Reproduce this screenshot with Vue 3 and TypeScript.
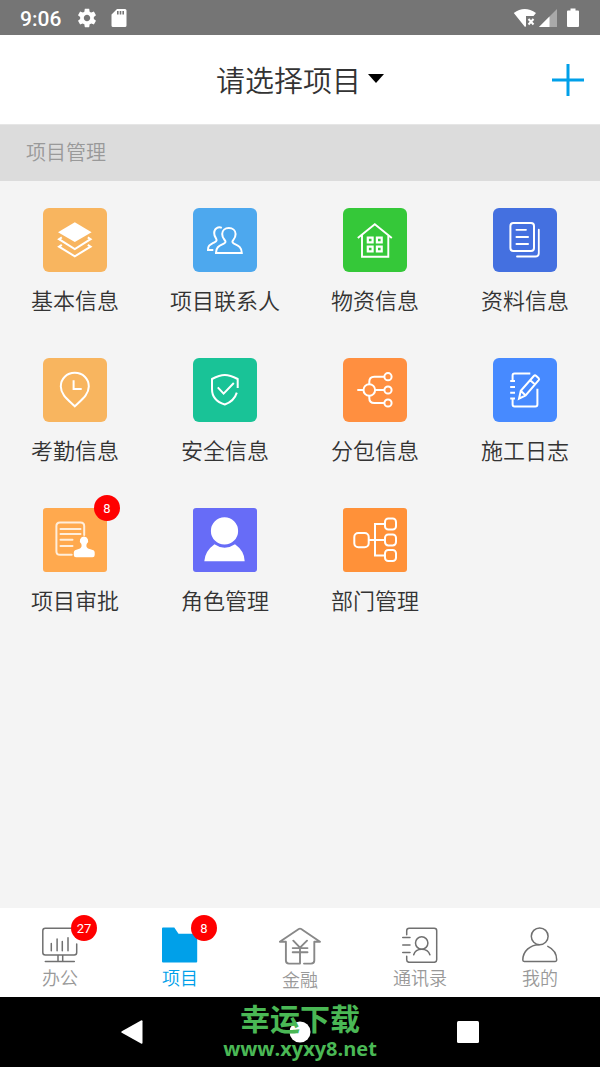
<script setup lang="ts">
import { ref } from 'vue'

interface Tile {
  label: string
  color: string
  art: string
  radius?: 'tight'
  badge?: number
}

interface Tab {
  label: string
  width: number
  height: number
  art: string
  badge?: number
}

const tiles: Tile[] = [
  {
    label: '基本信息',
    color: '#f8b55f',
    art: '<path fill="#fff" stroke="none" d="M31.8 14.3 48.6 24.2 31.8 34 15 24.2Z"/><path d="M18.8 29.3 16 31.2 31.8 41 47.6 31.2 44.8 29.3M18.8 36.8 16 38.7 31.8 48.3 47.6 38.7 44.8 36.8"/>',
  },
  {
    label: '项目联系人',
    color: '#4da8ee',
    art: '<path d="M23 45C23 39 26 38 30.8 35.6 33 34.5 33 33.5 31.3 31.5 29.8 29.7 29.2 28 29.2 26 29.2 22.4 32 20 35.8 20S42.6 22.4 42.6 26C42.6 28.5 42 30 40.4 31.8 39 33.5 39 34.5 41 35.6 46 38 48.8 39.5 48.8 45ZM28.8 19.8C25 18.2 21 21 21.2 25 21.2 27.3 21.7 28.7 22.8 30 24 32 24 33 21.5 34.3 17 36.8 14.8 37.5 15 42H20.3"/>',
  },
  {
    label: '物资信息',
    color: '#35c839',
    art: '<path stroke-width="1.9" d="M14.8 30 31.8 16.3 48.8 30M19 27V48.7H45.3V27"/><path stroke-width="2.2" stroke-linejoin="miter" d="M24.8 29.6h4.8v4.8h-4.8ZM33.9 29.6h4.8v4.8h-4.8ZM24.8 38.6h4.8v4.8h-4.8ZM33.9 38.6h4.8v4.8h-4.8Z"/>',
  },
  {
    label: '资料信息',
    color: '#4470e0',
    art: '<rect x="17.4" y="15" width="23.6" height="28" rx="3"/><path stroke-width="1.8" stroke-linecap="round" d="M23.4 21.8h9.6M23.4 29h11.7M23.4 36h11.7M45.8 21.7V45.2Q45.8 48.5 42.5 48.5H24"/>',
  },
  {
    label: '考勤信息',
    color: '#f8b55f',
    art: '<path d="M31.8 48.3C26 42.5 17.8 37 17.8 28.5 17.8 20.7 23.8 14.8 31.8 14.8S45.8 20.7 45.8 28.5C45.8 37 37.6 42.5 31.8 48.3ZM30.6 22.3V31H38.7"/>',
  },
  {
    label: '安全信息',
    color: '#19c397',
    art: '<path d="M44.7 30V21Q37 17 31.8 17T19 21V31C19 39 24 44.2 31.8 46.5 38 44.3 42 40.5 43.8 34.6M24.8 29.4 30.6 35.6 40.8 25"/>',
  },
  {
    label: '分包信息',
    color: '#ff8f40',
    art: '<circle cx="26.3" cy="32" r="5.8"/><circle cx="45" cy="18.7" r="3.6"/><circle cx="45" cy="32" r="3.6"/><circle cx="45" cy="45" r="3.6"/><path d="M14.3 32h6.2M32.1 32h9.3M41.4 18.7H31.3Q26.3 18.7 26.3 23.7V26.2M41.4 45H31.3Q26.3 45 26.3 40V37.8"/>',
  },
  {
    label: '施工日志',
    color: '#478aff',
    art: '<path d="M37.3 15.4H21.5Q19.6 15.4 19.6 17.3V23M17.2 23H22M17.2 29H22M17.2 34.8H22M17.2 40.5H22M19.6 40.5V46.5Q19.6 48.5 21.6 48.5H42.4Q44.4 48.5 44.4 46.5V30.8M26 40.7 27.8 32.8 41 17.8 Q42 17 43 17.8L45.7 20.3Q46.5 21.2 45.7 22.2L32.6 37.5ZM27.8 32.8 32.6 37.5M37.3 22.2 42 26.5"/>',
  },
  {
    label: '项目审批',
    color: '#ffa94e',
    radius: 'tight',
    badge: 8,
    art: '<path stroke="#ffeedb" stroke-linecap="round" d="M28.7 46.8H17Q13.4 46.8 13.4 43.2V18Q13.4 14.4 17 14.4H37.5Q41.2 14.4 41.2 18V27M17.5 21H37.5M17.5 26H37.5M17.5 31.8H29.5M17.5 38H29.5"/><path fill="#fff" stroke="none" d="M41 28.5A4.2 4.2 0 0 1 43.8 35.8C43 37.5 43.3 39.6 45 40.5L50.5 42.3Q51.7 43 51.7 44.5V47Q51.7 49.3 49.5 49.3H33Q30.8 49.3 30.8 47V44.5Q30.8 43 32 42.3L37 40.5C38.7 39.6 39 37.5 38.2 35.8A4.2 4.2 0 0 1 41 28.5Z"/>',
  },
  {
    label: '角色管理',
    color: '#676cf7',
    radius: 'tight',
    art: '<path fill="#fff" stroke="none" d="M31.5 9.3A13.6 13.6 0 1 1 31.5 36.5 13.6 13.6 0 1 1 31.5 9.3ZM21.5 36.3Q31.5 43.3 42 36.3 51.5 43 51.7 53.3H11.3Q12 43 21.5 36.3Z"/>',
  },
  {
    label: '部门管理',
    color: '#ff9139',
    radius: 'tight',
    art: '<rect x="11.3" y="25" width="14.4" height="14.2" rx="4"/><rect x="42" y="10.6" width="11" height="11" rx="3.3"/><rect x="42" y="26.4" width="11" height="11" rx="3.3"/><rect x="42" y="42" width="11" height="11" rx="3.3"/><path d="M25.7 32H42M42 16H32V47.5H42"/>',
  },
]

const tabs: Tab[] = [
  {
    label: '办公',
    width: 36,
    height: 36,
    badge: 27,
    art: '<path d="M30 1.2H3.3Q.8 1.2 .8 3.7V25.5Q.8 28 3.3 28H32.2Q34.7 28 34.7 25.5V17M9.3 16.5v7.3M15.1 12v11.8M20.3 14.5v9.3M26 10.7v13.1M16 28v6.5M20.7 28v6.5M3.3 34.6H32.3"/>',
  },
  {
    label: '项目',
    width: 36,
    height: 36,
    badge: 8,
    art: '<path fill="#00a0e9" stroke="none" d="M0 1.5Q0 .5 1 .5H12.3L16.5 6.7H34.2Q35.2 6.7 35.2 7.7V34.4Q35.2 35.4 34.2 35.4H1Q0 35.4 0 34.4Z"/>',
  },
  {
    label: '金融',
    width: 42,
    height: 38,
    art: '<path stroke="#888" stroke-width="1.9" d="M25 36.6H32Q35.3 36.6 35.3 33.5V14.7H41L22.2 2Q21 1.2 19.8 2L.8 14.7H6.9V33.5Q6.9 36.6 10 36.6H21V20.7M14.3 13.7 21 20.7 28 13.7M13.7 21.1H28.5M13.7 25.3H28.5"/>',
  },
  {
    label: '通讯录',
    width: 36,
    height: 36,
    art: '<path d="M4.7 7.7V3.7Q4.7 1.2 7.2 1.2H32.2Q34.7 1.2 34.7 3.7V32.8Q34.7 35.3 32.2 35.3H7.2Q4.7 35.3 4.7 32.8V29.2M.7 10.5H8M.7 18H8M.7 25.5H8M11.7 27.7Q13.3 22.2 19.7 22.2T27.9 27.7"/><circle cx="19.7" cy="16" r="6.2"/>',
  },
  {
    label: '我的',
    width: 36,
    height: 36,
    art: '<circle cx="17.7" cy="9.3" r="8.4"/><path d="M17 17.7C8 17.7 .8 24.5 .8 33Q.8 34.4 2.2 34.4H33.3Q34.7 34.4 34.7 33C34.7 27 31.3 22 25.8 19.4"/>',
  },
]

const activeTab = ref('项目')
</script>

<template>
  <div class="screen">
    <div class="status">
      <span class="clock">9:06</span>
      <svg class="gear" viewBox="0 0 24 24" aria-hidden="true">
        <path d="M19.43 12.98c.04-.32.07-.64.07-.98s-.03-.66-.07-.98l2.11-1.65c.19-.15.24-.42.12-.64l-2-3.46c-.12-.22-.39-.3-.61-.22l-2.49 1c-.52-.4-1.08-.73-1.69-.98l-.38-2.65C14.46 2.18 14.25 2 14 2h-4c-.25 0-.46.18-.49.42l-.38 2.65c-.61.25-1.17.59-1.69.98l-2.49-1c-.23-.09-.49 0-.61.22l-2 3.46c-.13.22-.07.49.12.64l2.11 1.65c-.04.32-.07.65-.07.98s.03.66.07.98l-2.11 1.65c-.19.15-.24.42-.12.64l2 3.46c.12.22.39.3.61.22l2.49-1c.52.4 1.08.73 1.69.98l.38 2.65c.03.24.24.42.49.42h4c.25 0 .46-.18.49-.42l.38-2.65c.61-.25 1.17-.59 1.69-.98l2.49 1c.23.09.49 0 .61-.22l2-3.46c.12-.22.07-.49-.12-.64l-2.11-1.65zM12 15.5c-1.93 0-3.5-1.57-3.5-3.5s1.57-3.5 3.5-3.5 3.5 1.57 3.5 3.5-1.57 3.5-3.5 3.5z" />
      </svg>
      <svg class="card" viewBox="0 0 16 20" aria-hidden="true">
        <path fill-rule="evenodd" d="M6 1H14Q15.500 1 15.500 2.500V17.500Q15.500 19 14 19H2Q.5 19 .5 17.500V6.500ZM6 3V6.500H7.600V3ZM8.700 3V6.500H10.300V3ZM11.400 3V6.500H13V3Z" />
      </svg>
      <span class="signals">
        <svg width="24" height="20" viewBox="0 0 24 20" aria-hidden="true">
          <path d="M.8 5Q11.500-3 23 5L20.500 8H13V18.200L12 19Z" />
          <path fill="none" stroke="#fff" stroke-width="2" d="m15.500 11 5 5.500m0-5.500-5 5.500" />
        </svg>
        <svg class="cell" width="18" height="20" viewBox="0 0 18 20" aria-hidden="true">
          <path fill="#a9a9a9" d="M18 1V19H0Z" />
          <path d="M10.500 8.500V19H0Z" />
        </svg>
        <svg width="12" height="20" viewBox="0 0 12 20" aria-hidden="true">
          <path d="M3.500.5h5v2H11q1 0 1 1V18q0 1-1 1H1q-1 0-1-1V3.500q0-1 1-1h2.500Z" />
        </svg>
      </span>
    </div>

    <header class="header">
      <button class="picker" type="button">
        请选择项目
        <svg width="16" height="9" viewBox="0 0 16 9" aria-hidden="true"><path d="M0 0H16L8 9Z" /></svg>
      </button>
      <button class="add" type="button" aria-label="添加">
        <svg width="32" height="32" viewBox="0 0 32 32" aria-hidden="true">
          <path fill="none" stroke="#00a0e9" stroke-width="3" d="M16 0V32M0 16H32" />
        </svg>
      </button>
    </header>

    <main class="content">
      <h2 class="section">项目管理</h2>
      <div class="grid">
        <button v-for="tile in tiles" :key="tile.label" class="tile" type="button">
          <span class="icon" :class="tile.radius" :style="{ backgroundColor: tile.color }">
            <svg viewBox="0 0 64 64" aria-hidden="true" v-html="tile.art"></svg>
            <span v-if="tile.badge" class="badge">{{ tile.badge }}</span>
          </span>
          <span>{{ tile.label }}</span>
        </button>
      </div>
    </main>

    <nav class="tabs">
      <a
        v-for="tab in tabs"
        :key="tab.label"
        href="#"
        class="tab"
        :class="{ active: tab.label === activeTab }"
        @click.prevent="activeTab = tab.label"
      >
        <span class="tab-icon">
          <svg
            :width="tab.width"
            :height="tab.height"
            :viewBox="`0 0 ${tab.width} ${tab.height}`"
            aria-hidden="true"
            v-html="tab.art"
          ></svg>
          <span v-if="tab.badge" class="badge">{{ tab.badge }}</span>
        </span>
        <span>{{ tab.label }}</span>
      </a>
    </nav>

    <div class="system">
      <button type="button" aria-label="返回">
        <svg width="22" height="24" viewBox="0 0 22 24" aria-hidden="true">
          <path d="M.8 11.200 20 .4Q21.500-.3 21.500 1.300V22.700Q21.500 24.300 20 23.600L.8 12.800Q-.3 12 .8 11.200Z" />
        </svg>
      </button>
      <button type="button" aria-label="主页">
        <svg width="22" height="22" viewBox="0 0 22 22" aria-hidden="true"><circle cx="11" cy="11" r="10.500" /></svg>
      </button>
      <button type="button" aria-label="最近任务">
        <svg width="22" height="22" viewBox="0 0 22 22" aria-hidden="true"><rect width="22" height="22" rx="1.500" /></svg>
      </button>
      <div class="watermark">
        <strong>幸运下载</strong>
        <span>www.xyxy8.net</span>
      </div>
    </div>
  </div>
</template>

<style>
body {
  margin: 0;
}
</style>

<style scoped>
.screen {
  display: flex;
  flex-direction: column;
  min-height: 100vh;
  background: #f4f4f4;
  color: #333;
  font-family: "Noto Sans CJK SC", sans-serif;
  font-weight: 350;
}

svg {
  display: block;
}

button {
  margin: 0;
  padding: 0;
  border: 0;
  background: none;
  color: inherit;
  font: inherit;
  cursor: pointer;
}

.status {
  display: flex;
  align-items: center;
  height: 35px;
  padding: 0 21px 0 20px;
  background: #757575;
  color: #fff;
  fill: #fff;
}

.clock {
  padding-top: 2px;
  font: 500 21px/34px Roboto, sans-serif;
}

.gear {
  width: 22px;
  height: 22px;
  margin-left: 15px;
}

.card {
  width: 16px;
  height: 20px;
  margin-left: 13px;
}

.signals {
  display: flex;
  align-items: center;
  margin-left: auto;
}

.cell {
  margin: 0 10px 0 2px;
}

.header {
  display: grid;
  grid-template-columns: 1fr auto 1fr;
  align-items: center;
  height: 89px;
  padding: 0 16px;
  border-bottom: 1px solid #e6e6e6;
  background: #fff;
}

.picker {
  display: flex;
  grid-column: 2;
  align-items: center;
  gap: 7px;
  padding-bottom: 2px;
  font-size: 29px;
  line-height: 40px;
}

.picker svg {
  fill: #000;
}

.add {
  justify-self: end;
}

.content {
  flex: 1;
}

.section {
  margin: 0;
  padding: 0 26px 2px;
  background: #dcdcdc;
  color: #999;
  font-size: 20px;
  font-weight: 350;
  line-height: 54px;
}

.grid {
  display: grid;
  grid-template-columns: repeat(4, 1fr);
}

.tile {
  display: flex;
  flex-direction: column;
  align-items: center;
  gap: 11px;
  padding: 27px 0 16px;
  font-size: 22px;
  line-height: 32px;
  white-space: nowrap;
}

.icon {
  position: relative;
  width: 64px;
  height: 64px;
  border-radius: 6px;
}

.icon.tight {
  border-radius: 3px;
}

.icon svg {
  fill: none;
  stroke: #fff;
  stroke-width: 2;
}

.badge {
  position: absolute;
  top: -13px;
  right: -13px;
  width: 26px;
  height: 26px;
  border-radius: 50%;
  background: #f00;
  color: #fff;
  font: 400 13px/27px Roboto, sans-serif;
  text-align: center;
}

.tabs {
  display: grid;
  grid-template-columns: repeat(5, 1fr);
  height: 89px;
  background: #fff;
}

.tab {
  display: flex;
  flex-direction: column;
  align-items: center;
  gap: 1px;
  padding-top: 19px;
  color: #999;
  font-size: 18px;
  line-height: 26px;
  text-decoration: none;
}

.tab.active {
  color: #00a0e9;
}

.tab-icon {
  position: relative;
}

.tab-icon svg {
  fill: none;
  stroke: #707070;
  stroke-width: 1.5;
  stroke-linecap: round;
  stroke-linejoin: round;
}

.tab-icon .badge {
  top: -12px;
  right: -19px;
}

.system {
  position: relative;
  display: grid;
  grid-template-columns: repeat(3, 1fr);
  place-items: center;
  height: 70px;
  padding: 0 8%;
  background: #000;
  fill: #fff;
}

.watermark {
  position: absolute;
  inset: 3px 0 0;
  display: flex;
  flex-direction: column;
  align-items: center;
  color: #4ab855;
  font: 700 20px/30px "Open Sans", sans-serif;
  pointer-events: none;
}

.watermark strong {
  font: 700 30px/34px "Noto Sans CJK SC", sans-serif;
}
</style>
